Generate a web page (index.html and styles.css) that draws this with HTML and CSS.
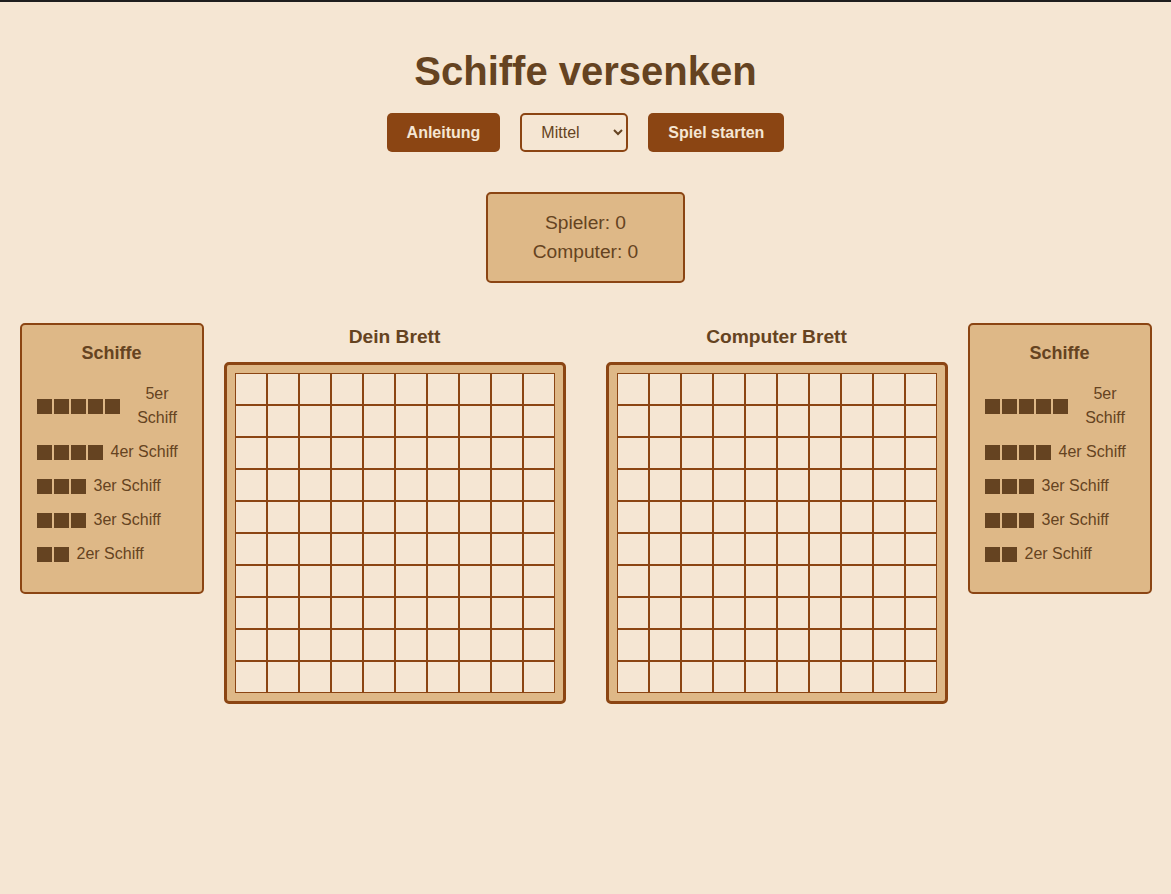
FILE: index.html
```html
<!DOCTYPE html>
<html lang="de">
<head>
<meta charset="utf-8">
<title>Schiffe versenken</title>
<link rel="stylesheet" href="styles.css">
</head>
<body>
<div class="page">
  <h1 class="title">Schiffe versenken</h1>
  <div class="controls">
    <button class="btn">Anleitung</button>
    <select class="select">
      <option>Leicht</option>
      <option selected>Mittel</option>
      <option>Schwer</option>
    </select>
    <button class="btn">Spiel starten</button>
  </div>
  <div class="score">
    <div>Spieler: 0</div>
    <div>Computer: 0</div>
  </div>
  <div class="game">
    <div class="ships">
      <h3 class="ships-title">Schiffe</h3>
      <div class="ship"><div class="blocks"><span></span><span></span><span></span><span></span><span></span></div><span class="label">5er Schiff</span></div>
      <div class="ship"><div class="blocks"><span></span><span></span><span></span><span></span></div><span class="label">4er Schiff</span></div>
      <div class="ship"><div class="blocks"><span></span><span></span><span></span></div><span class="label">3er Schiff</span></div>
      <div class="ship"><div class="blocks"><span></span><span></span><span></span></div><span class="label">3er Schiff</span></div>
      <div class="ship"><div class="blocks"><span></span><span></span></div><span class="label">2er Schiff</span></div>
    </div>
    <div class="boards">
      <div class="board-col">
        <h3 class="board-title">Dein Brett</h3>
        <div class="board"><div class="grid" id="g1"></div></div>
      </div>
      <div class="board-col">
        <h3 class="board-title">Computer Brett</h3>
        <div class="board"><div class="grid" id="g2"></div></div>
      </div>
    </div>
    <div class="ships">
      <h3 class="ships-title">Schiffe</h3>
      <div class="ship"><div class="blocks"><span></span><span></span><span></span><span></span><span></span></div><span class="label">5er Schiff</span></div>
      <div class="ship"><div class="blocks"><span></span><span></span><span></span><span></span></div><span class="label">4er Schiff</span></div>
      <div class="ship"><div class="blocks"><span></span><span></span><span></span></div><span class="label">3er Schiff</span></div>
      <div class="ship"><div class="blocks"><span></span><span></span><span></span></div><span class="label">3er Schiff</span></div>
      <div class="ship"><div class="blocks"><span></span><span></span></div><span class="label">2er Schiff</span></div>
    </div>
  </div>
</div>
<script src="script.js"></script>
</body>
</html>
```

FILE: script.js
```js
["g1", "g2"].forEach(function (id) {
  var g = document.getElementById(id);
  for (var i = 0; i < 100; i++) {
    var c = document.createElement("div");
    c.className = "cell";
    g.appendChild(c);
  }
});
```

FILE: styles.css
```css
html, body {
  margin: 0;
  padding: 0;
}
body {
  background: #f5e6d3;
  color: #654321;
  font-family: "Liberation Sans", Arial, sans-serif;
  font-size: 16px;
  line-height: 1.5;
  border-top: 2px solid #1e1e1e;
  min-height: 892px;
}
.page {
  padding: 20px 0;
  display: flex;
  flex-direction: column;
  align-items: center;
}
.title {
  margin: 26px 0 19px;
  font-size: 40px;
  line-height: 46px;
  font-weight: bold;
  color: #654321;
}
.controls {
  display: flex;
  gap: 20px;
  align-items: center;
}
.btn {
  font-family: inherit;
  font-size: 16px;
  font-weight: bold;
  line-height: 19px;
  padding: 10px 20px;
  border: none;
  border-radius: 5px;
  background: #8b4513;
  color: #f5e6d3;
  cursor: pointer;
}
.select {
  font-family: inherit;
  font-size: 16px;
  width: 108px;
  height: 39px;
  padding: 0 8px 0 15px;
  border: 2px solid #8b4513;
  border-radius: 5px;
  background: #f5e6d3;
  color: #654321;
}
.score {
  margin-top: 40px;
  width: 165px;
  padding: 15px;
  border: 2px solid #8b4513;
  border-radius: 5px;
  background: #deb887;
  font-size: 19.2px;
  line-height: 28.5px;
  text-align: center;
}
.game {
  margin-top: 40px;
  display: flex;
  gap: 20px;
  align-items: flex-start;
  justify-content: center;
}
.ships {
  width: 150px;
  padding: 15px 15px 16px;
  border: 2px solid #8b4513;
  border-radius: 5px;
  background: #deb887;
  text-align: center;
}
.ships-title {
  margin: 0 0 15px;
  font-size: 18px;
  line-height: 27px;
  font-weight: bold;
}
.ship {
  display: flex;
  align-items: center;
  gap: 8px;
  margin-bottom: 10px;
}
.blocks {
  display: flex;
  gap: 2px;
  flex-shrink: 0;
}
.blocks span {
  width: 15px;
  height: 15px;
  background: #654321;
}
.label {
  text-align: center;
}
.boards {
  display: flex;
  gap: 40px;
}
.board-col {
  display: flex;
  flex-direction: column;
  align-items: center;
}
.board-title {
  margin: 0 0 10px;
  font-size: 19.2px;
  line-height: 28.8px;
  font-weight: bold;
}
.board {
  border: 3px solid #8b4513;
  border-radius: 5px;
  background: #deb887;
  padding: 8px;
}
.grid {
  display: grid;
  grid-template-columns: repeat(10, 32px);
  grid-auto-rows: 32px;
}
.cell {
  background: #f5e6d3;
  border: 1px solid #8b4513;
}
```
